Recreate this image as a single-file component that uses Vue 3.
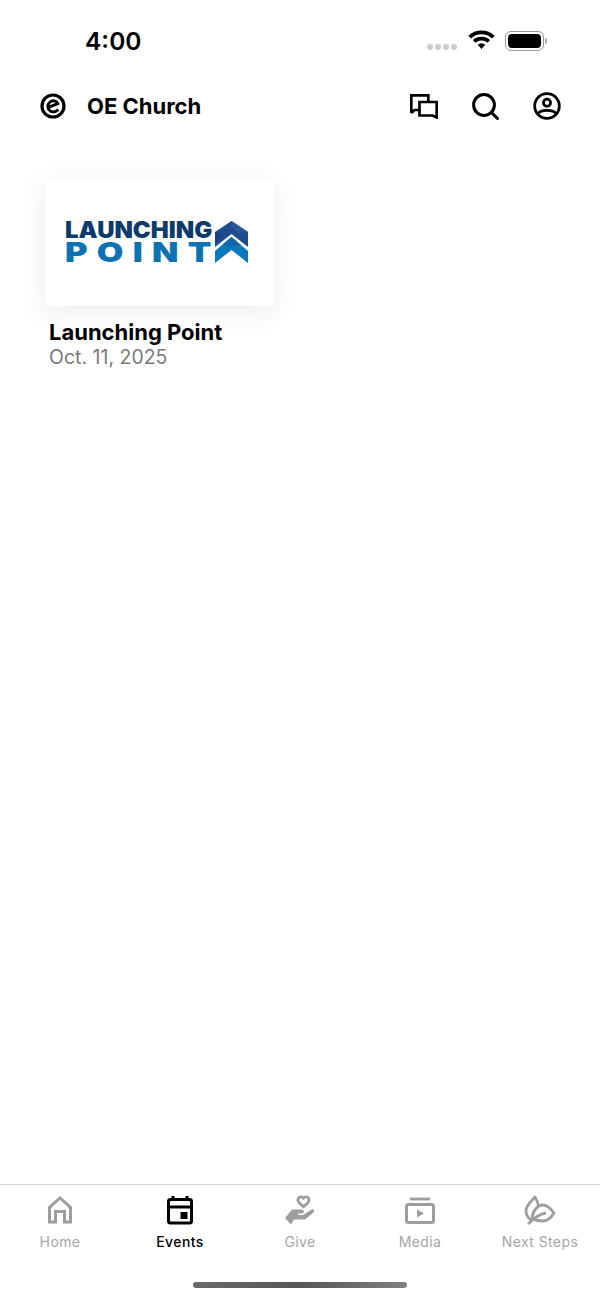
<script setup>
const tabs = [
  { label: 'Home', key: 'home' },
  { label: 'Events', key: 'events', active: true },
  { label: 'Give', key: 'give' },
  { label: 'Media', key: 'media' },
  { label: 'Next Steps', key: 'steps' }
]
</script>

<template>
  <div class="screen">
    <div class="status">
      <span class="time">4:00</span>
      <div class="status-right">
        <div class="dots"><i></i><i></i><i></i><i></i></div>
        <svg class="wifi" width="27" height="20" viewBox="0 0 28 21">
          <path d="M1.5 7.5 A18 18 0 0 1 26.5 7.5" fill="none" stroke="#000" stroke-width="3.9" />
          <path d="M6.3 12 A11.5 11.5 0 0 1 21.7 12" fill="none" stroke="#000" stroke-width="3.9" />
          <path d="M10 15.6 A6 6 0 0 1 18 15.6 L14 20 Z" fill="#000" />
        </svg>
        <div class="battery"><div class="battery-fill"></div></div>
        <div class="battery-cap"></div>
      </div>
    </div>

    <header class="header">
      <div class="brand">
        <svg class="brand-logo" width="26" height="26" viewBox="0 0 26 26" fill="none" stroke="#000">
          <circle cx="13" cy="13" r="11" stroke-width="3.2" />
          <path d="M7.6 14.6 L17.8 10.6 C16.6 7.6 12.4 7 10 9 C7 11.4 7.2 16 10.2 18 C12.8 19.6 16.2 19 18.4 16.6" stroke-width="2.9" />
        </svg>
        <span class="brand-name">OE Church</span>
      </div>
      <div class="actions">
        <svg width="28" height="25" viewBox="0 0 28 25" fill="none" stroke="#000" stroke-width="2.7">
          <path d="M1.3 19 V1.3 H18.3 V8 M9.5 16 H4.5 L1.3 19" />
          <path d="M9.5 8 H26.7 V23.5 L22.5 21.5 H9.5 Z" />
        </svg>
        <svg width="27" height="27" viewBox="0 0 27 27" fill="none" stroke="#000" stroke-width="3">
          <circle cx="12" cy="12" r="10.4" />
          <path d="M19.6 19.6 L25.5 25.5" stroke-linecap="round" />
        </svg>
        <svg width="28" height="28" viewBox="0 0 30 30" fill="none" stroke="#000" stroke-width="3">
          <circle cx="15" cy="15" r="13.2" />
          <circle cx="15" cy="11.5" r="3.8" />
          <path d="M5 23.5 C8 18.4 22 18.4 25 23.5" />
        </svg>
      </div>
    </header>

    <main class="content">
      <article class="event">
        <div class="card">
          <div class="logo">
            <div class="logo-words">
              <div class="logo-top">LAUNCHING</div>
              <div class="logo-bottom">POINT</div>
            </div>
            <svg class="logo-mark" width="33" height="42" viewBox="0 0 33 42">
              <path d="M16.5 0 L33 11 V26 L16.5 13 L0 26 V11 Z" fill="#1f4c8e" />
              <path d="M16.5 0 L33 11 L24 13 L16.5 6 Z" fill="#2b5698" />
              <path d="M0 11 L9 14 L0 22 Z" fill="#173f7d" />
              <path d="M16.5 16 L33 30 V42 L16.5 29 L0 42 V30 Z" fill="#0a78bb" />
              <path d="M16.5 16 L26 24 L16.5 26 L8 23 Z" fill="#1568a8" />
            </svg>
          </div>
        </div>
        <h2 class="event-title">Launching Point</h2>
        <p class="event-date">Oct. 11, 2025</p>
      </article>
    </main>

    <nav class="tabbar">
      <div v-for="t in tabs" :key="t.key" class="tab" :class="{ active: t.active }">
        <svg class="tab-icon" width="32" height="32" viewBox="0 0 32 32">
          <g v-if="t.key === 'home'" fill="none" stroke="#9e9e9e" stroke-width="3">
            <path d="M5.5 27 V12.5 L16 3 L26.5 12.5 V27 H20.5 V16.5 H11.5 V27 Z" />
          </g>
          <g v-else-if="t.key === 'events'">
            <path d="M9 1 V6 M23 1 V6" stroke="#000" stroke-width="3" />
            <rect x="4.5" y="4.5" width="23" height="23.5" rx="2" fill="none" stroke="#000" stroke-width="3" />
            <path d="M4.5 12 H27.5" stroke="#000" stroke-width="3" />
            <rect x="16.5" y="17" width="7" height="7" fill="#000" />
          </g>
          <g v-else-if="t.key === 'give'">
            <path d="M19.5 3 C17.5 0.8 14 2 14 5 C14 7.8 17.2 9.6 19.5 11.6 C21.8 9.6 25 7.8 25 5 C25 2 21.5 0.8 19.5 3 Z" fill="none" stroke="#9e9e9e" stroke-width="2.8" />
            <path d="M1 23 L8 14.5 H18 C20.5 14.5 20.5 18.5 18 18.5 H14 V20 H19 L27.5 14.5 C30 13.5 31 16 29.5 17.5 L21 24.5 H10 L7 29.5 Z" fill="#9e9e9e" />
          </g>
          <g v-else-if="t.key === 'media'">
            <path d="M6 4 H26" stroke="#9e9e9e" stroke-width="2.8" />
            <rect x="2.5" y="9.5" width="27" height="18" rx="2" fill="none" stroke="#9e9e9e" stroke-width="3" />
            <path d="M13 14.5 L20 18.5 L13 22.5 Z" fill="#9e9e9e" />
          </g>
          <g v-else fill="none" stroke="#9e9e9e" stroke-width="2.8" stroke-linejoin="round">
            <path d="M7 25 C3 22 1 18 2.5 13 C4 9 7 6 11 2 C13 5 14 8 14.5 11" />
            <path d="M8 23 C9 15 14 10 19 10 C23 10 27 14 30 18 C27 23 23 26 19 26 C15 26 11 25 8 23 Z" />
            <path d="M4 29 C9 24 15 19 22 18" />
          </g>
        </svg>
        <span class="tab-label">{{ t.label }}</span>
      </div>
      <div class="home-indicator"></div>
    </nav>
  </div>
</template>

<style>
html, body { margin: 0; background: #fff; }
</style>

<style scoped>
.screen {
  width: 600px;
  height: 1300px;
  display: flex;
  flex-direction: column;
  background: #fff;
  font-family: Inter, "Liberation Sans", sans-serif;
  color: #000;
  overflow: hidden;
}
.status {
  height: 76px;
  flex: none;
  display: flex;
  justify-content: space-between;
  align-items: flex-start;
  box-sizing: border-box;
  padding: 26px 53px 0 85px;
}
.time { font-size: 24.5px; line-height: 30px; font-weight: 600; }
.status-right { display: flex; align-items: center; height: 30px; }
.dots { display: flex; gap: 2px; margin-right: 11px; margin-top: 12px; }
.dots i { width: 6px; height: 6px; border-radius: 50%; background: #cdcdcd; display: block; }
.wifi { margin-right: 10px; margin-top: -3px; }
.battery {
  width: 33px; height: 14px; padding: 2px; border: 1.5px solid #999; border-radius: 6px; box-sizing: content-box;
}
.battery-fill { width: 100%; height: 100%; background: #000; border-radius: 4px; }
.battery-cap { width: 2px; height: 6px; background: #aaa; border-radius: 0 2px 2px 0; margin-left: 1px; }
.header {
  height: 60px;
  flex: none;
  display: flex;
  justify-content: space-between;
  align-items: center;
  padding: 0 39px 0 40px;
}
.brand { display: flex; align-items: center; gap: 21px; }
.brand-name { font-size: 22px; font-weight: 700; }
.actions { display: flex; gap: 34px; align-items: center; }
.content { flex: 1; padding: 42px 0 0 45px; }
.card {
  width: 229px; height: 128px; background: #fff;
  box-sizing: border-box;
  padding-right: 7px;
  box-shadow: 0 6px 26px rgba(0, 0, 0, 0.08);
  display: flex; align-items: center; justify-content: center;
}
.logo { display: flex; align-items: center; gap: 2px; }
.logo-words { width: 148px; padding-top: 1px; }
.logo-top {
  font-size: 22.5px; line-height: 20px; font-weight: 900; color: #0c3a6b; white-space: nowrap;
  transform: scaleX(1.065); transform-origin: left center;
}
.logo-bottom {
  font-size: 27.5px; line-height: 25px; font-weight: 900; color: #0b73b3; letter-spacing: 7.4px; white-space: nowrap;
  transform: scaleX(1.25); transform-origin: left center;
}
.event-title { margin: 13px 0 0 4px; font-size: 22px; line-height: 26px; font-weight: 700; }
.event-date { margin: 0 0 0 4px; font-size: 19.5px; line-height: 24px; font-weight: 400; color: #7a7a7a; }
.tabbar {
  position: relative;
  height: 116px;
  flex: none;
  box-sizing: border-box;
  border-top: 1px solid #d9d9d9;
  display: flex;
  padding-top: 10px;
}
.tab { flex: 1; display: flex; flex-direction: column; align-items: center; color: #a6a6a6; }
.tab.active { color: #000; font-weight: 500; }
.tab-icon { display: block; }
.tab-label { font-size: 14px; line-height: 18px; margin-top: 6px; letter-spacing: 0.4px; white-space: nowrap; }
.home-indicator {
  position: absolute; left: 193px; bottom: 12px; width: 214px; height: 6px; border-radius: 3px;
  background: linear-gradient(90deg, #6a6a6a, #555 50%, #808080);
}
</style>
